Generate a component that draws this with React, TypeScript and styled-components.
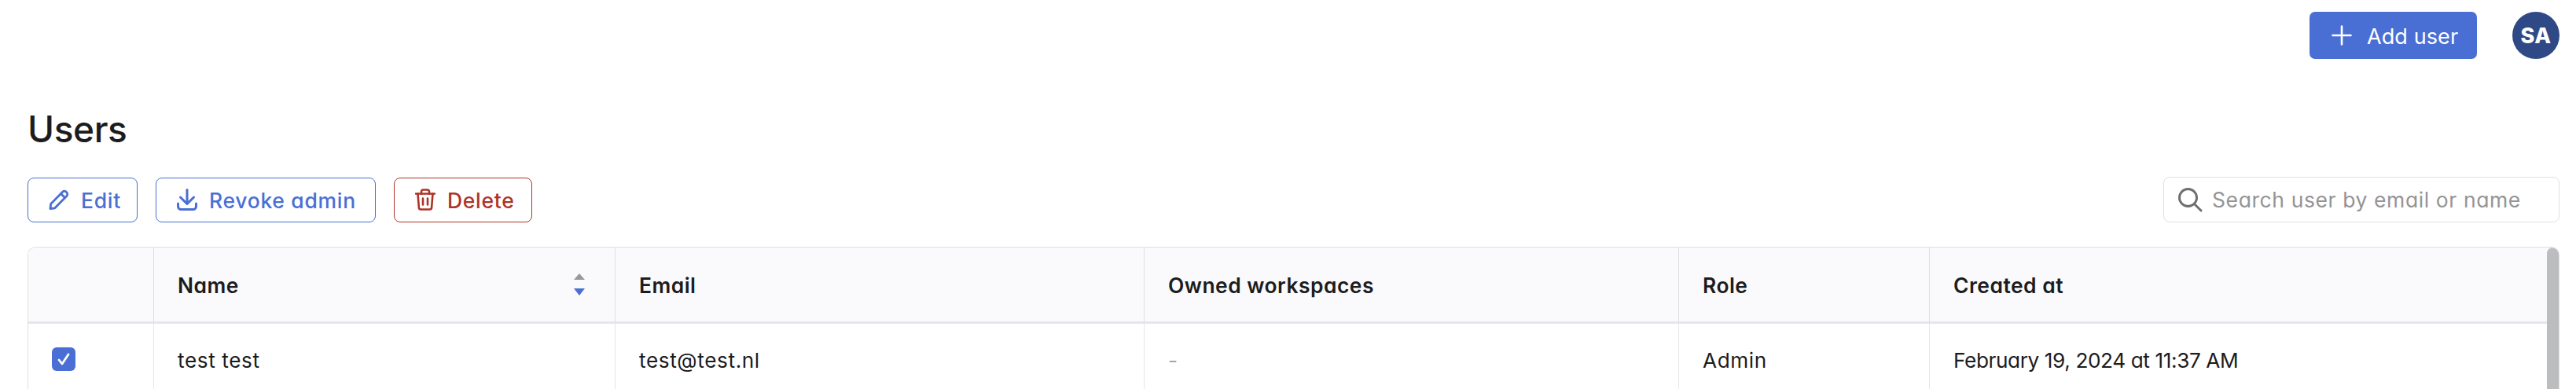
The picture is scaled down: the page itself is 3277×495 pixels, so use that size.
import React from "react";
import styled, { createGlobalStyle } from "styled-components";

const Global = createGlobalStyle`
  html, body { margin: 0; padding: 0; height: 495px; overflow: hidden; background: #fff; }
  body { font-family: Inter, "Open Sans", "Liberation Sans", sans-serif; font-feature-settings: "cv11" 1; color: #1c1c1e; }
  * { box-sizing: border-box; }
`;

const Page = styled.div`
  display: flex;
  flex-direction: column;
  height: 495px;
  overflow: hidden;
  padding: 15px 21px 0 35px;
`;

const TopBar = styled.header`
  display: flex;
  justify-content: flex-end;
  align-items: center;
  gap: 45px;
  height: 60px;
`;

const PrimaryButton = styled.button`
  display: flex;
  align-items: center;
  width: 213px;
  height: 60px;
  padding: 2px 0 0 28px;
  gap: 19px;
  border: 0;
  border-radius: 7px;
  background: #4a6fd4;
  color: #fff;
  font: 400 27px Inter, sans-serif;
  font-feature-settings: "cv11" 1;
  letter-spacing: 0.1px;
  svg { margin-top: -2px; }
`;

const Avatar = styled.div`
  display: flex;
  align-items: center;
  justify-content: center;
  width: 60px;
  height: 60px;
  border-radius: 50%;
  background: #2f4986;
  color: #fff;
  font-size: 27px;
  font-weight: 800;
  letter-spacing: 0.4px;
`;

const Title = styled.h1`
  margin: 64px 0 0;
  height: 50px;
  font-size: 46px;
  line-height: 50px;
  font-weight: 500;
  letter-spacing: -0.4px;
  color: #1c1c1e;
`;

const Toolbar = styled.div`
  display: flex;
  align-items: center;
  gap: 23px;
  margin-top: 36px;
`;

const OutlineButton = styled.button<{ $danger?: boolean; $w: number }>`
  display: flex;
  align-items: center;
  justify-content: flex-start;
  gap: 15px;
  width: ${(p) => p.$w}px;
  height: 57px;
  padding: 2px 0 0 26px;
  border: 1px solid ${(p) => (p.$danger ? "#ad3328" : "#4a6fd4")};
  border-radius: 8px;
  background: #fff;
  color: ${(p) => (p.$danger ? "#ad3328" : "#4a6fd4")};
  font: 500 26.5px Inter, sans-serif;
  font-feature-settings: "cv11" 1;
  letter-spacing: 0.7px;
  svg { margin-top: -2px; }
`;

const SearchBox = styled.div`
  display: flex;
  align-items: center;
  gap: 12px;
  width: 504px;
  height: 58px;
  margin-left: auto;
  padding-left: 17px;
  border: 1px solid #e0e0e3;
  border-radius: 8px;
  color: #6e6e70;
  font-size: 26.5px;
`;

const Placeholder = styled.span`
  color: #949496;
  letter-spacing: 0.6px;
`;

const TableFrame = styled.div`
  position: relative;
  flex: 1;
  margin-top: 31px;
  border: 1px solid #e0e0e3;
  border-bottom: 0;
  border-radius: 10px 10px 0 0;
  overflow: hidden;
`;

const Grid = styled.div`
  display: grid;
  grid-template-columns: 160px 587px 673px 680px 319px 1fr;
  grid-template-rows: 97px 90px;
`;

const HeaderCell = styled.div`
  display: flex;
  align-items: center;
  justify-content: space-between;
  padding: 2px 38px 0 30px;
  background: #fafafc;
  border-right: 1px solid #e0e0e3;
  border-bottom: 3px solid #e6e6ea;
  font-size: 26.4px;
  font-weight: 600;
  letter-spacing: 0.5px;
  color: #1c1c1e;
  &:last-child { border-right: 0; }
`;

const Cell = styled.div<{ $muted?: boolean }>`
  display: flex;
  align-items: center;
  padding: 2px 30px 0;
  border-right: 1px solid #e6e6ea;
  font-size: 26.2px;
  font-weight: 400;
  letter-spacing: 0.6px;
  color: ${(p) => (p.$muted ? "#a3a3a6" : "#1c1c1e")};
  &:last-child { border-right: 0; }
`;

const DateCell = styled(Cell)`
  letter-spacing: -0.4px;
`;

const CheckCell = styled(Cell)`
  padding: 0 0 0 30px;
`;

const Checkbox = styled.span`
  display: flex;
  align-items: center;
  justify-content: center;
  width: 30px;
  height: 30px;
  border-radius: 6px;
  background: #4a6fd4;
`;

const SortStack = styled.span`
  display: flex;
  flex-direction: column;
  gap: 11px;
  margin-top: -2px;
`;

const Scrollbar = styled.div`
  position: absolute;
  top: 0;
  right: 0;
  bottom: 0;
  width: 15px;
  border-radius: 8px 8px 0 0;
  background: #bcbdbf;
`;

const PlusIcon = () => (
  <svg width="26" height="26" viewBox="0 0 26 26" fill="none" stroke="#fff" strokeWidth="2.6" strokeLinecap="round">
    <path d="M13 1.5v23M1.5 13h23" />
  </svg>
);

const PencilIcon = () => (
  <svg width="26" height="26" viewBox="0 0 26 26" fill="none" stroke="currentColor" strokeWidth="2.8" strokeLinejoin="round" strokeLinecap="round">
    <path d="M2 24.5l.6-6L17.6 3.2a3.2 3.2 0 0 1 4.6 0l.6.6a3.2 3.2 0 0 1 0 4.6L7.8 23.8z" />
    <path d="M15.5 5.5l5 5" />
  </svg>
);

const DownloadIcon = () => (
  <svg width="26" height="28" viewBox="0 0 26 28" fill="none" stroke="currentColor" strokeWidth="3" strokeLinecap="round" strokeLinejoin="round">
    <path d="M13 1.5v17.5M4.5 11l8.5 8.5L21.5 11" />
    <path d="M1.5 19v3.5a4 4 0 0 0 4 4h15a4 4 0 0 0 4-4V19" />
  </svg>
);

const TrashIcon = () => (
  <svg width="26" height="28" viewBox="0 0 26 28" fill="none" stroke="currentColor" strokeWidth="2.6" strokeLinecap="round" strokeLinejoin="round">
    <path d="M1 6.5h24" />
    <path d="M8 6.5V4a2.5 2.5 0 0 1 2.5-2.5h5A2.5 2.5 0 0 1 18 4v2.5" />
    <path d="M3.5 6.5l1.4 17.6a2.6 2.6 0 0 0 2.6 2.4h11a2.6 2.6 0 0 0 2.6-2.4l1.4-17.6" />
    <path d="M10 12.5v8M16 12.5v8" />
  </svg>
);

const SearchIcon = () => (
  <svg width="32" height="32" viewBox="0 0 32 32" fill="none" stroke="currentColor" strokeWidth="3" strokeLinecap="round">
    <circle cx="13.5" cy="13.5" r="11" />
    <path d="M21.5 21.5l8.5 8.5" />
  </svg>
);

const CheckIcon = () => (
  <svg width="18" height="18" viewBox="0 0 18 18" fill="none" stroke="#fff" strokeWidth="2.8" strokeLinecap="round" strokeLinejoin="round">
    <path d="M3 10l4 5 8-12" />
  </svg>
);

const SortIcon = () => (
  <SortStack>
    <svg width="14" height="8" viewBox="0 0 14 8"><path d="M7 0l7 8H0z" fill="#999" /></svg>
    <svg width="14" height="9" viewBox="0 0 14 9"><path d="M0 0h14L7 9z" fill="#4a6fd4" /></svg>
  </SortStack>
);

export default function App() {
  return (
    <Page>
      <Global />
      <TopBar>
        <PrimaryButton><PlusIcon />Add user</PrimaryButton>
        <Avatar>SA</Avatar>
      </TopBar>
      <Title>Users</Title>
      <Toolbar>
        <OutlineButton $w={140}><PencilIcon />Edit</OutlineButton>
        <OutlineButton $w={280}><DownloadIcon />Revoke admin</OutlineButton>
        <OutlineButton $w={176} $danger><TrashIcon />Delete</OutlineButton>
        <SearchBox><SearchIcon /><Placeholder>Search user by email or name</Placeholder></SearchBox>
      </Toolbar>
      <TableFrame>
        <Grid>
          <HeaderCell />
          <HeaderCell>Name<SortIcon /></HeaderCell>
          <HeaderCell>Email</HeaderCell>
          <HeaderCell>Owned workspaces</HeaderCell>
          <HeaderCell>Role</HeaderCell>
          <HeaderCell>Created at</HeaderCell>
          <CheckCell><Checkbox><CheckIcon /></Checkbox></CheckCell>
          <Cell>test test</Cell>
          <Cell>test@test.nl</Cell>
          <Cell $muted>-</Cell>
          <Cell>Admin</Cell>
          <DateCell>February 19, 2024 at 11:37 AM</DateCell>
        </Grid>
        <Scrollbar />
      </TableFrame>
    </Page>
  );
}
